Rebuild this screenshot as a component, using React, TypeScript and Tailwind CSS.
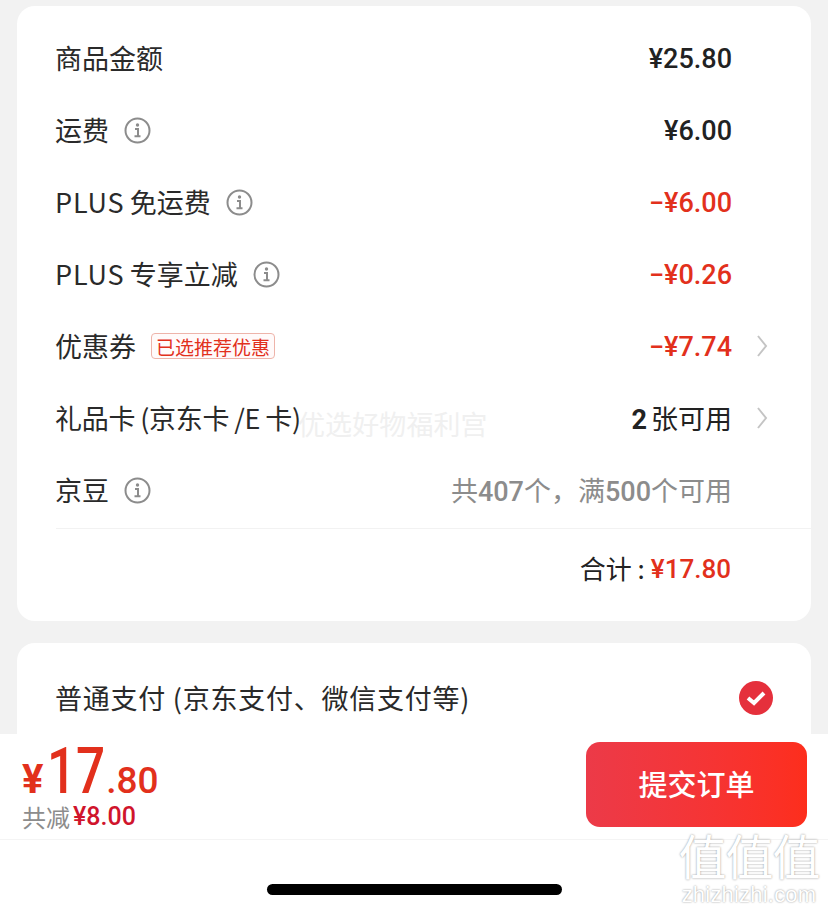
import type { ReactNode } from 'react';

const numFont = "font-['Roboto','Noto_Sans_CJK_SC',sans-serif]";

function InfoIcon() {
  return (
    <svg width="27" height="27" viewBox="0 0 27 27" fill="none" className="ml-[15px] shrink-0">
      <circle cx="13.5" cy="13.5" r="12" stroke="#8c8c8c" strokeWidth="2" />
      <circle cx="13.5" cy="8" r="1.7" fill="#8c8c8c" />
      <path d="M11 12h3v7M10.5 19.2h6" stroke="#8c8c8c" strokeWidth="2" />
    </svg>
  );
}

function Chevron() {
  return (
    <svg width="12" height="24" viewBox="0 0 12 24" fill="none" className="ml-[24px] shrink-0">
      <path d="M2 2l8 10-8 10" stroke="#c4c4c4" strokeWidth="2" />
    </svg>
  );
}

function Row({ label, value, info, arrow, tag }: {
  label: ReactNode;
  value: ReactNode;
  info?: boolean;
  arrow?: boolean;
  tag?: string;
}) {
  return (
    <div className="flex h-[72px] items-center pl-[38px] pr-[79px]">
      <span className="-mt-[1px] text-[27px] leading-none text-[#2a2a2a] whitespace-pre">{label}</span>
      {info && <InfoIcon />}
      {tag && (
        <span className="ml-[15px] flex h-[26px] items-center rounded-[4px] border border-[#eeb4aa] bg-[#fffafa] px-[4px] text-[19px] leading-none text-[#e2301c]">
          {tag}
        </span>
      )}
      <div className={`ml-auto flex items-center ${arrow ? 'mr-[-36px]' : ''}`}>
        {value}
        {arrow && <Chevron />}
      </div>
    </div>
  );
}

function Money({ children, red }: { children: string; red?: boolean }) {
  return (
    <span className={`${numFont} mt-[2px] text-[27px] font-medium leading-none ${red ? 'text-[#e2301c]' : 'text-[#222222]'}`}>
      {children}
    </span>
  );
}

function Plus({ rest }: { rest: string }) {
  return (
    <>
      <span className="tracking-[0.8px]">PLUS</span>
      {`\u2009${rest}`}
    </>
  );
}

export default function App() {
  return (
    <div className="relative flex h-[912px] w-[828px] flex-col overflow-hidden bg-[#f2f2f2] font-['Noto_Sans_CJK_SC',sans-serif]">
      <div className="flex-1 px-[17px] pt-[6px]">
        <div className="h-[615px] rounded-[18px] bg-white pt-[16px]">
          <Row label="商品金额" value={<Money>¥25.80</Money>} />
          <Row label="运费" info value={<Money>¥6.00</Money>} />
          <Row label={<Plus rest="免运费" />} info value={<Money red>−¥6.00</Money>} />
          <Row label={<Plus rest="专享立减" />} info value={<Money red>−¥0.26</Money>} />
          <Row label="优惠券" tag="已选推荐优惠" arrow value={<Money red>−¥7.74</Money>} />
          <Row
            label={<span className="tracking-[-0.3px]">{'礼品卡\u2009(京东卡\u2009/E\u2009卡)'}</span>}
            arrow
            value={
              <span className="mt-[1px] text-[27px] leading-none text-[#222222]">
                <span className={`${numFont} mr-[4px] font-bold`}>2</span>张可用
              </span>
            }
          />
          <Row
            label="京豆"
            info
            value={
              <span className="mt-[1px] text-[27px] leading-none text-[#8c8c8c]">
                共<span className={`${numFont} font-medium`}>407</span>个，满<span className={`${numFont} font-medium`}>500</span>个可用
              </span>
            }
          />
          <div className="ml-[39px] mt-[2px] flex h-[81px] items-center justify-end border-t border-[#f2f2f2] pb-[2px] pr-[80px]">
            <span className="text-[26px] leading-none text-[#222222]">合计 :</span>
            <span className={`${numFont} ml-[6px] mt-[2px] text-[26px] font-medium leading-none text-[#e2301c]`}>¥17.80</span>
          </div>
        </div>
        <div className="mt-[22px] flex h-[91px] items-start justify-between rounded-t-[18px] bg-white pl-[38px] pr-[38px] pt-[38px]">
          <span className="text-[27px] leading-[34px] tracking-[0.75px] text-[#2a2a2a]">普通支付 (京东支付、微信支付等)</span>
          <svg width="34" height="34" viewBox="0 0 34 34" className="shrink-0">
            <circle cx="17" cy="17" r="17" fill="#e5303c" />
            <path d="M9 17l6 5 10-10" fill="none" stroke="#ffffff" strokeWidth="4" />
          </svg>
        </div>
      </div>

      <div className="h-[178px] shrink-0 bg-white">
        <div className="flex h-[106px] items-start justify-between border-b border-[#f4f4f4] pl-[22px] pr-[21px]">
          <div className="flex flex-col pt-[6px]">
            <div className={`${numFont} flex items-baseline font-medium leading-none text-[#e2301c]`}>
              <span className="text-[40px] font-bold">¥</span>
              <span className="ml-[4px] mr-[-14px] inline-block origin-left scale-x-[0.8] text-[64px]">17</span>
              <span className="text-[37px]">.80</span>
            </div>
            <div className="flex items-center leading-none">
              <span className="text-[24px] text-[#8c8c8c]">共减</span>
              <span className={`${numFont} ml-[3px] text-[25px] font-medium text-[#d0142c]`}>¥8.00</span>
            </div>
          </div>
          <button className="mt-[8px] flex h-[85px] w-[221px] items-center justify-center rounded-[14px] bg-gradient-to-r from-[#ec3a48] to-[#fd2e1c] pb-[2px] text-[29px] font-medium text-white">
            提交订单
          </button>
        </div>
        <div className="mx-auto mt-[44px] h-[11px] w-[295px] rounded-full bg-black" />
      </div>

      {/* watermarks sit on top of everything */}
      <div className="absolute left-[298px] top-[407px] text-[27px] leading-[34px] tracking-[0.1px] text-[#f0f0f0]">
        优选好物福利宫
      </div>
      <div className="absolute left-[678px] top-[826px] flex w-[142px] flex-col items-center text-white [text-shadow:0_0_2px_#8a8a8a]">
        <span className="text-[48px] leading-[56px] tracking-[-1px]">值值值</span>
        <span className="font-['Liberation_Sans',sans-serif] text-[22px] leading-[26px] tracking-[0.2px]">zhizhizhi.com</span>
      </div>
    </div>
  );
}
